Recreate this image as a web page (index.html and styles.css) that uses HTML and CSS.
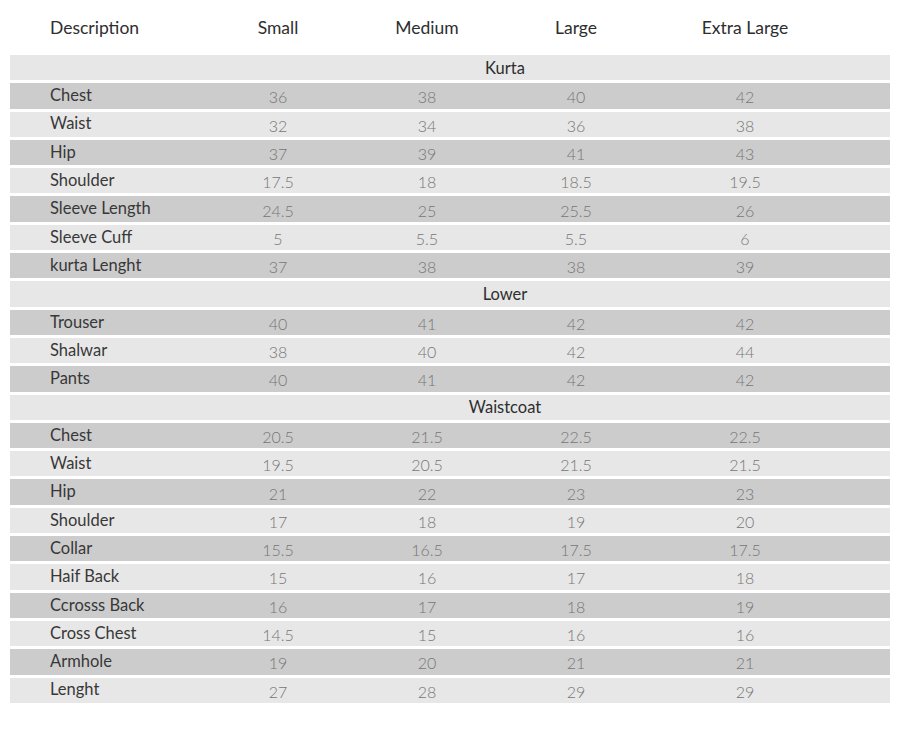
FILE: index.html
```html
<!DOCTYPE html>
<html>
<head>
<meta charset="utf-8">
<link rel="stylesheet" href="styles.css">
</head>
<body>
<div class="chart">
  <div class="head">
    <div class="desc">Description</div>
    <div class="hc">Small</div>
    <div class="hc">Medium</div>
    <div class="hc">Large</div>
    <div class="hc">Extra Large</div>
  </div>
  <div class="rows">
    <div class="section">Kurta</div>
    <div class="row dark"><div class="lbl">Chest</div><div class="v">36</div><div class="v">38</div><div class="v">40</div><div class="v">42</div></div>
    <div class="row"><div class="lbl">Waist</div><div class="v">32</div><div class="v">34</div><div class="v">36</div><div class="v">38</div></div>
    <div class="row dark"><div class="lbl">Hip</div><div class="v">37</div><div class="v">39</div><div class="v">41</div><div class="v">43</div></div>
    <div class="row"><div class="lbl">Shoulder</div><div class="v">17.5</div><div class="v">18</div><div class="v">18.5</div><div class="v">19.5</div></div>
    <div class="row dark"><div class="lbl">Sleeve Length</div><div class="v">24.5</div><div class="v">25</div><div class="v">25.5</div><div class="v">26</div></div>
    <div class="row"><div class="lbl">Sleeve Cuff</div><div class="v">5</div><div class="v">5.5</div><div class="v">5.5</div><div class="v">6</div></div>
    <div class="row dark"><div class="lbl">kurta Lenght</div><div class="v">37</div><div class="v">38</div><div class="v">38</div><div class="v">39</div></div>
    <div class="section">Lower</div>
    <div class="row dark"><div class="lbl">Trouser</div><div class="v">40</div><div class="v">41</div><div class="v">42</div><div class="v">42</div></div>
    <div class="row"><div class="lbl">Shalwar</div><div class="v">38</div><div class="v">40</div><div class="v">42</div><div class="v">44</div></div>
    <div class="row dark"><div class="lbl">Pants</div><div class="v">40</div><div class="v">41</div><div class="v">42</div><div class="v">42</div></div>
    <div class="section">Waistcoat</div>
    <div class="row dark"><div class="lbl">Chest</div><div class="v">20.5</div><div class="v">21.5</div><div class="v">22.5</div><div class="v">22.5</div></div>
    <div class="row"><div class="lbl">Waist</div><div class="v">19.5</div><div class="v">20.5</div><div class="v">21.5</div><div class="v">21.5</div></div>
    <div class="row dark"><div class="lbl">Hip</div><div class="v">21</div><div class="v">22</div><div class="v">23</div><div class="v">23</div></div>
    <div class="row"><div class="lbl">Shoulder</div><div class="v">17</div><div class="v">18</div><div class="v">19</div><div class="v">20</div></div>
    <div class="row dark"><div class="lbl">Collar</div><div class="v">15.5</div><div class="v">16.5</div><div class="v">17.5</div><div class="v">17.5</div></div>
    <div class="row"><div class="lbl">Haif Back</div><div class="v">15</div><div class="v">16</div><div class="v">17</div><div class="v">18</div></div>
    <div class="row dark"><div class="lbl">Ccrosss Back</div><div class="v">16</div><div class="v">17</div><div class="v">18</div><div class="v">19</div></div>
    <div class="row"><div class="lbl">Cross Chest</div><div class="v">14.5</div><div class="v">15</div><div class="v">16</div><div class="v">16</div></div>
    <div class="row dark"><div class="lbl">Armhole</div><div class="v">19</div><div class="v">20</div><div class="v">21</div><div class="v">21</div></div>
    <div class="row"><div class="lbl">Lenght</div><div class="v">27</div><div class="v">28</div><div class="v">29</div><div class="v">29</div></div>
  </div>
</div>
</body>
</html>
```

FILE: styles.css
```css
html, body {
  margin: 0;
  padding: 0;
  background: #ffffff;
}

.chart {
  width: 880px;
  margin-left: 10px;
  font-family: "Lato", "Liberation Sans", sans-serif;
}

.head,
.row {
  display: grid;
  grid-template-columns: 193px 150px 148px 150px 188px 1fr;
  align-items: center;
}

.head {
  height: 55px;
  color: #2e2e2e;
  font-size: 17.5px;
  padding-bottom: 1px;
  box-sizing: border-box;
}

.head .desc {
  padding-left: 40px;
}

.head .hc {
  text-align: center;
}

.rows {
  display: flex;
  flex-direction: column;
  gap: 3px;
}

.row,
.section {
  height: 25.3px;
  background: #e7e7e7;
}

.row.dark {
  background: #cccccc;
}

.section {
  display: flex;
  align-items: center;
  justify-content: center;
  padding-left: 110px;
  font-size: 16.5px;
  color: #2e2e2e;
}

.lbl {
  padding-left: 40px;
  font-size: 16.5px;
  color: #383838;
  line-height: 1;
  padding-bottom: 1px;
}

.v {
  text-align: center;
  font-size: 16px;
  font-weight: 300;
  color: #767676;
  line-height: 1;
  padding-top: 3px;
}
```
